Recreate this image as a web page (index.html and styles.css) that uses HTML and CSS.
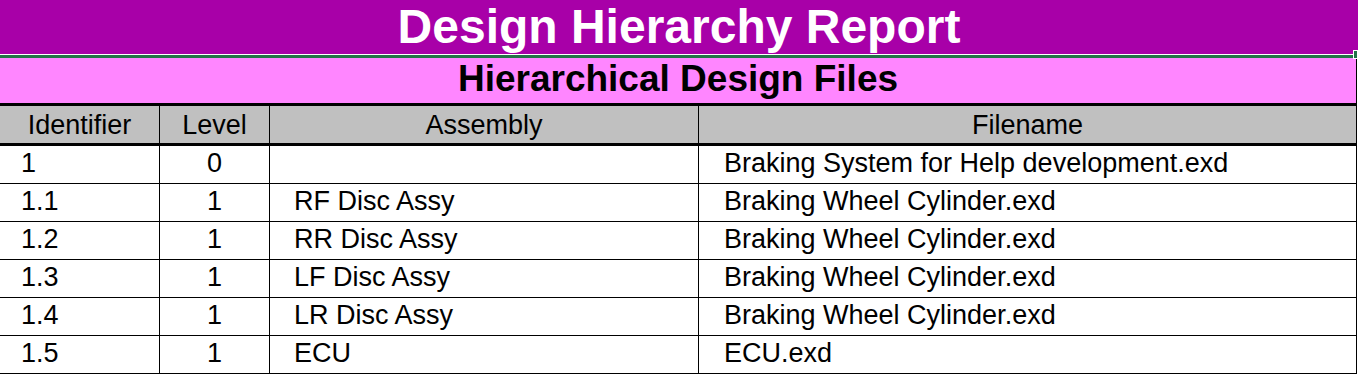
FILE: index.html
```html
<!DOCTYPE html>
<html lang="en">
<head>
<meta charset="utf-8">
<title>Design Hierarchy Report</title>
<link rel="stylesheet" href="styles.css">
</head>
<body>
<div class="report">
  <h1 class="title">Design Hierarchy Report</h1>
  <div class="sel-line"><span class="sel-handle"></span></div>
  <h2 class="subtitle">Hierarchical Design Files</h2>
  <div class="grid" role="table">
    <div class="cell head" role="columnheader">Identifier</div>
    <div class="cell head" role="columnheader">Level</div>
    <div class="cell head" role="columnheader">Assembly</div>
    <div class="cell head" role="columnheader">Filename</div>

    <div class="cell id">1</div>
    <div class="cell lvl">0</div>
    <div class="cell asm"></div>
    <div class="cell file">Braking System for Help development.exd</div>

    <div class="cell id">1.1</div>
    <div class="cell lvl">1</div>
    <div class="cell asm">RF Disc Assy</div>
    <div class="cell file">Braking Wheel Cylinder.exd</div>

    <div class="cell id">1.2</div>
    <div class="cell lvl">1</div>
    <div class="cell asm">RR Disc Assy</div>
    <div class="cell file">Braking Wheel Cylinder.exd</div>

    <div class="cell id">1.3</div>
    <div class="cell lvl">1</div>
    <div class="cell asm">LF Disc Assy</div>
    <div class="cell file">Braking Wheel Cylinder.exd</div>

    <div class="cell id">1.4</div>
    <div class="cell lvl">1</div>
    <div class="cell asm">LR Disc Assy</div>
    <div class="cell file">Braking Wheel Cylinder.exd</div>

    <div class="cell id">1.5</div>
    <div class="cell lvl">1</div>
    <div class="cell asm">ECU</div>
    <div class="cell file">ECU.exd</div>
  </div>
</div>
</body>
</html>
```
FILE: styles.css
```css
* { box-sizing: border-box; }
html, body {
  margin: 0;
  padding: 0;
  background: #ffffff;
}
body {
  font-family: "Liberation Sans", Arial, sans-serif;
  color: #000000;
}
.report {
  width: 1358px;
  position: relative;
}
.title {
  margin: 0;
  height: 54px;
  background: #a800a8;
  color: #ffffff;
  font-size: 48px;
  font-weight: bold;
  line-height: 53px;
  text-align: center;
  overflow: hidden;
}
.sel-line {
  width: 1353px;
  height: 4px;
  border-top: 1px solid #ffffff;
  background: #217346;
}
.sel-handle {
  position: absolute;
  left: 1353px;
  top: 50px;
  width: 5px;
  height: 9px;
  background: #217346;
  border: 1px solid #ffffff;
}
.subtitle {
  margin: 0;
  width: 1357px;
  height: 45px;
  background: #ff86ff;
  border-right: 1px solid #000000;
  font-size: 37px;
  font-weight: bold;
  line-height: 41px;
  text-align: center;
}
.grid {
  display: grid;
  grid-template-columns: 160px 110px 429px 658px;
  width: 1357px;
  border-top: 3px solid #000000;
  font-size: 27px;
}
.cell {
  border-right: 1px solid #000000;
  border-bottom: 1px solid #000000;
  height: 38px;
  line-height: 34px;
  white-space: nowrap;
  overflow: hidden;
}
.head {
  background: #c0c0c0;
  height: 40px;
  border-bottom: 3px solid #000000;
  padding-top: 3px;
  line-height: 33px;
  text-align: center;
  font-weight: normal;
}
.id { padding-left: 21px; }
.lvl { text-align: center; }
.asm { padding-left: 24px; }
.file { padding-left: 25px; }
```
